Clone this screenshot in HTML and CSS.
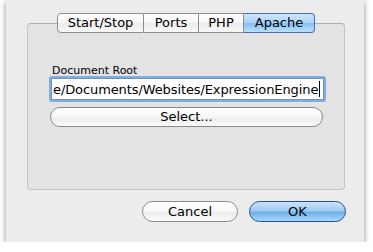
FILE: index.html
```html
<!DOCTYPE html>
<html lang="en">
<head>
  <meta charset="UTF-8">
  <title>Preferences</title>
  <link rel="stylesheet" href="styles.css">
</head>
<body>

<div class="window">
  <div class="group">
    <div class="tabs">
      <div class="tab tab-start">Start/Stop</div>
      <div class="tab tab-ports">Ports</div>
      <div class="tab tab-php">PHP</div>
      <div class="tab tab-apache selected">Apache</div>
    </div>

    <div class="form">
      <div class="label">Document Root</div>
      <div class="field">
        <span class="value">e/Documents/Websites/ExpressionEngine</span><span class="caret"></span>
      </div>
      <div class="button wide">Select...</div>
    </div>
  </div>

  <div class="actions">
    <div class="button push">Cancel</div>
    <div class="button push default">OK</div>
  </div>
</div>

</body>
</html>
```

FILE: styles.css
```css
body {
  margin: 0;
  background-color: #fff;
  font-family: "DejaVu Sans", "Liberation Sans", sans-serif;
  color: #000;
}

.window {
  box-sizing: border-box;
  width: 358px;
  height: 242px;
  margin-left: 6px;
  padding: 23px 18px 0 21px;
  background-color: #ececec;
  box-shadow: 0 2px 6px rgba(0, 0, 0, 0.45);
}

.group {
  box-sizing: border-box;
  height: 167px;
  margin-right: 1px;
  background-color: #e3e3e3;
  border: 1px solid #c4c4c4;
  border-top-color: #adadad;
  border-radius: 4px;
}

.tabs {
  display: flex;
  justify-content: center;
  margin-top: -11px;
}

.tab {
  box-sizing: border-box;
  height: 20px;
  font-size: 13px;
  line-height: 18px;
  text-align: center;
  border: 1px solid #8e8e8e;
  border-left: none;
  background: linear-gradient(#ffffff, #f6f6f6 50%, #ececec 51%, #f8f8f8);
}

.tab-start {
  width: 87px;
  border-left: 1px solid #8e8e8e;
  border-radius: 4px 0 0 4px;
}

.tab-ports { width: 55px; }
.tab-php { width: 45px; }

.tab-apache {
  width: 71px;
  border-radius: 0 4px 4px 0;
}

.tab.selected {
  border-color: #4a6ea8;
  background: linear-gradient(#cfe6fb, #a9d2f6 50%, #86c0f0 51%, #b9e0fd);
}

.form {
  padding: 31px 20px 0 23px;
}

.label {
  font-size: 11px;
  line-height: 13px;
  padding-left: 1px;
}

.field {
  box-sizing: border-box;
  display: flex;
  align-items: center;
  height: 22px;
  margin-top: 1px;
  padding-left: 1px;
  overflow: hidden;
  background-color: #fff;
  border: 1px solid #7e8ea6;
  box-shadow: 0 0 0 2px #7eaee6;
  border-radius: 1px;
  font-size: 13px;
  letter-spacing: -0.1px;
  white-space: nowrap;
}

.caret {
  flex: none;
  width: 1px;
  height: 16px;
  margin-left: 1px;
  background-color: #000;
}

.button {
  box-sizing: border-box;
  height: 20px;
  font-size: 13px;
  line-height: 18px;
  text-align: center;
  border: 1px solid #8a8a8a;
  border-radius: 10px;
  background: linear-gradient(#ffffff, #f7f7f7 50%, #ededed 55%, #fbfbfb);
}

.wide {
  margin: 7px 1px 0 -1px;
}

.actions {
  display: flex;
  justify-content: flex-end;
  gap: 11px;
  margin-top: 11px;
}

.push {
  width: 96px;
  height: 21px;
  line-height: 19px;
  border-radius: 11px;
}

.default {
  width: 97px;
  border-color: #2c4c8c;
  background: linear-gradient(#cde4f9, #9ccaf2 45%, #6eb0ea 55%, #a8d8fd);
}
```
